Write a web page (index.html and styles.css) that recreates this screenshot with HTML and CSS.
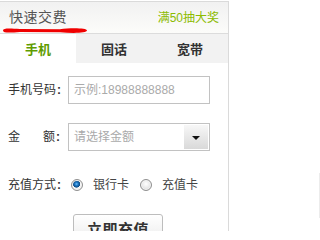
FILE: index.html
```html
<!DOCTYPE html>
<html lang="zh">
<head>
<meta charset="utf-8">
<title>快速交费</title>
<link rel="stylesheet" href="styles.css">
</head>
<body>
<div class="panel">
  <div class="header">
    <div class="title">
      <span class="title-text">快速交费</span>
      <svg class="brush" width="86" height="7" viewBox="0 0 86 7">
        <path d="M1,3.5 C1,1 7,1.2 18,2 L58,2.2 C68,0.8 85,0.8 85,3.5 C85,6.2 70,6.4 58,5.2 L18,5 C7,6 1,6 1,3.5 Z" fill="#f00000"/>
      </svg>
    </div>
    <span class="promo">满50抽大奖</span>
  </div>
  <div class="tabs">
    <div class="tab active">手机</div>
    <div class="tab">固话</div>
    <div class="tab">宽带</div>
  </div>
  <div class="form">
    <div class="row">
      <span class="label">手机号码<b class="colon">:</b></span>
      <div class="field"><span class="placeholder">示例:18988888888</span></div>
    </div>
    <div class="row row-select">
      <span class="label label-spread"><span>金</span><span>额<b class="colon">:</b></span></span>
      <div class="field select">
        <span class="placeholder">请选择金额</span>
        <span class="drop"><span class="arrow"></span></span>
      </div>
    </div>
    <div class="row row-radio">
      <span class="label">充值方式<b class="colon">:</b></span>
      <span class="radio checked"></span>
      <span class="radio-text">银行卡</span>
      <span class="radio"></span>
      <span class="radio-text">充值卡</span>
    </div>
    <div class="row row-btn">
      <div class="btn">立即充值</div>
    </div>
  </div>
</div>
<div class="edge"></div>
</body>
</html>
```
FILE: styles.css
```css
html, body {
  margin: 0;
  padding: 0;
  background: #fff;
}
body {
  display: flex;
  align-items: flex-start;
  height: 231px;
  overflow: hidden;
  font-family: "Liberation Sans", "Noto Sans CJK SC", sans-serif;
  font-size: 12px;
  color: #333;
}
.panel {
  width: 228px;
  margin: 1px 0 0 -1px;
  border: 1px solid #dadada;
  border-bottom: none;
  height: 240px;
  background: #fff;
}
.header {
  height: 31px;
  border-bottom: 1px solid #dcdcdc;
  background: linear-gradient(#f1f1f1, #fcfcfa);
  display: flex;
  justify-content: space-between;
  align-items: flex-start;
}
.title {
  padding: 7px 0 0 9px;
  display: flex;
  flex-direction: column;
}
.title-text {
  font-size: 14px;
  line-height: 17px;
  color: #555;
  letter-spacing: 0.5px;
}
.brush {
  display: block;
  margin: 1px 0 0 -7px;
}
.promo {
  color: #8cbb00;
  font-size: 12px;
  line-height: 14px;
  padding: 9px 9px 0 0;
}
.tabs {
  display: grid;
  grid-template-columns: 76px 76px 76px;
  height: 29px;
}
.tab {
  display: flex;
  align-items: center;
  justify-content: center;
  font-size: 13px;
  font-weight: bold;
  background: #f2f2f2;
  color: #333;
}
.tab.active {
  background: #fff;
  color: #5f9c00;
}
.form {
  padding: 0 0 0 8px;
}
.row {
  display: flex;
  align-items: center;
  margin-top: 13px;
}
.row-select {
  margin-top: 19px;
}
.row-radio {
  margin-top: 24px;
  height: 20px;
}
.row-btn {
  margin-top: 19px;
  padding-left: 65px;
}
.label {
  width: 60px;
  line-height: 16px;
  color: #333;
}
.colon {
  font-weight: bold;
  margin-left: 1px;
}
.label-spread {
  display: flex;
  justify-content: space-between;
  width: 52px;
  margin-right: 8px;
}
.field {
  width: 140px;
  height: 26px;
  border: 1px solid #c2c2c2;
  display: flex;
  align-items: center;
  padding: 0;
  background: #fff;
}
.placeholder {
  color: #aaa;
  padding-left: 5px;
  line-height: 16px;
}
.select {
  justify-content: space-between;
}
.drop {
  width: 24px;
  height: 24px;
  margin-right: 1px;
  background: linear-gradient(#f7f7f7, #d9d9d9);
  display: flex;
  align-items: center;
  justify-content: center;
}
.arrow {
  width: 0;
  height: 0;
  border-left: 4px solid transparent;
  border-right: 4px solid transparent;
  border-top: 4px solid #111;
  margin-top: 2px;
}
.radio {
  width: 10px;
  height: 10px;
  border-radius: 50%;
  border: 1px solid #8f8f8f;
  background: radial-gradient(circle at 50% 40%, #ffffff 0, #e9e9e9 50%, #c9c9c9 100%);
  margin-left: 3px;
  box-shadow: inset 0 0 0 1px #f4f4f4;
}
.radio.checked {
  background: radial-gradient(circle at 45% 40%, #6fc0ff 0, #1d78c4 1.6px, #0b4a86 3.3px, #f5f5f5 3.9px, #dcdcdc 100%);
}
.radio-text {
  margin-left: 10px;
  margin-right: 0;
  line-height: 16px;
  color: #444;
}
.radio-text + .radio {
  margin-left: 11px;
}
.btn {
  width: 88px;
  height: 26px;
  border: 1px solid #bdbdbd;
  border-radius: 3px;
  background: linear-gradient(#ffffff, #ececec);
  font-size: 15px;
  font-weight: bold;
  color: #333;
  display: flex;
  align-items: center;
  justify-content: center;
  letter-spacing: 0.5px;
}
.edge {
  margin-left: auto;
  margin-top: 173px;
  width: 1px;
  height: 45px;
  background: #ececec;
}
```
